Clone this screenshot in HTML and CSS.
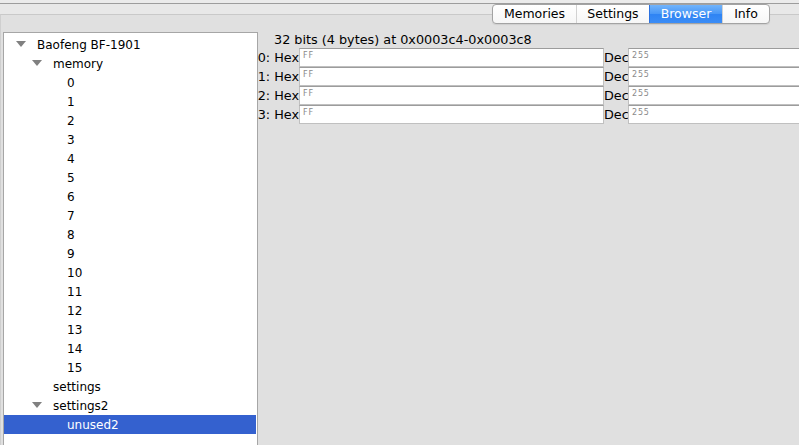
FILE: index.html
```html
<!DOCTYPE html>
<html lang="en">
    <head>
        <title>Baofeng BF-1901 - Browser</title>
        <meta charset="utf-8" />
        <link rel="stylesheet" href="styles.css">
    </head>
    <body>
        <div class="window">
            <div class="topstrip"></div>
            <div class="tabbar">
                <ul class="segmented">
                    <li class="tab-memories">Memories</li>
                    <li class="tab-settings">Settings</li>
                    <li class="tab-browser active">Browser</li>
                    <li class="tab-info">Info</li>
                </ul>
            </div>
            <div class="pane">
                <div class="tree">
                    <div class="node lvl0"><span class="twisty open"></span>Baofeng BF-1901</div>
                    <div class="node lvl1"><span class="twisty open"></span>memory</div>
                    <div class="node lvl2"><span class="twisty"></span>0</div>
                    <div class="node lvl2"><span class="twisty"></span>1</div>
                    <div class="node lvl2"><span class="twisty"></span>2</div>
                    <div class="node lvl2"><span class="twisty"></span>3</div>
                    <div class="node lvl2"><span class="twisty"></span>4</div>
                    <div class="node lvl2"><span class="twisty"></span>5</div>
                    <div class="node lvl2"><span class="twisty"></span>6</div>
                    <div class="node lvl2"><span class="twisty"></span>7</div>
                    <div class="node lvl2"><span class="twisty"></span>8</div>
                    <div class="node lvl2"><span class="twisty"></span>9</div>
                    <div class="node lvl2"><span class="twisty"></span>10</div>
                    <div class="node lvl2"><span class="twisty"></span>11</div>
                    <div class="node lvl2"><span class="twisty"></span>12</div>
                    <div class="node lvl2"><span class="twisty"></span>13</div>
                    <div class="node lvl2"><span class="twisty"></span>14</div>
                    <div class="node lvl2"><span class="twisty"></span>15</div>
                    <div class="node lvl1"><span class="twisty"></span>settings</div>
                    <div class="node lvl1"><span class="twisty open"></span>settings2</div>
                    <div class="node lvl2 selected"><span class="twisty"></span>unused2</div>
                </div>
                <div class="browser">
                    <div class="caption">32 bits (4 bytes) at 0x0003c4-0x0003c8</div>
                    <div class="byte-row">
                        <div class="label"><span>0: Hex</span></div>
                        <div class="field hex">FF</div>
                        <div class="dec">Dec</div>
                        <div class="field decval">255</div>
                    </div>
                    <div class="byte-row">
                        <div class="label"><span>1: Hex</span></div>
                        <div class="field hex">FF</div>
                        <div class="dec">Dec</div>
                        <div class="field decval">255</div>
                    </div>
                    <div class="byte-row">
                        <div class="label"><span>2: Hex</span></div>
                        <div class="field hex">FF</div>
                        <div class="dec">Dec</div>
                        <div class="field decval">255</div>
                    </div>
                    <div class="byte-row">
                        <div class="label"><span>3: Hex</span></div>
                        <div class="field hex">FF</div>
                        <div class="dec">Dec</div>
                        <div class="field decval">255</div>
                    </div>
                </div>
            </div>
        </div>
    </body>
</html>
```

FILE: styles.css
```css
* {
    padding: 0;
    margin: 0;
    box-sizing: border-box;
}
body {
    width: 799px;
    height: 445px;
    overflow: hidden;
    background-color: #e0e0e0;
    font-family: "DejaVu Sans", "Liberation Sans", sans-serif;
    font-size: 12px;
    color: #000;
    -webkit-font-smoothing: antialiased;
}

.window {
    width: 799px;
    height: 445px;
    overflow: hidden;
}

.topstrip {
    height: 4px;
    background-color: #ebebeb;
    border-bottom: 1px solid #9d9d9d;
}

/* segmented tab control, sits over the pane's top border */
.tabbar {
    position: relative;
    z-index: 1;
    height: 10px;
    display: flex;
    justify-content: flex-end;
    padding-right: 29px;
    background-color: #e8e8e8;
}

.segmented {
    list-style: none;
    display: flex;
    height: 20px;
    border: 1px solid #a3a3a3;
    border-radius: 4px;
    overflow: hidden;
    background: linear-gradient(#ffffff, #f6f6f6);
    box-shadow: 0 1px 1px rgba(0, 0, 0, 0.08);
    font-size: 12.5px;
}

.segmented li {
    line-height: 18px;
    text-align: center;
    border-left: 1px solid #d2d2d2;
}

.segmented .tab-memories {
    width: 83px;
    border-left: none;
}
.segmented .tab-settings {
    width: 73px;
}
.segmented .tab-browser {
    width: 73px;
}
.segmented .tab-info {
    width: 47px;
}

.segmented li.active {
    color: #fff;
    border-left-color: #2c72e0;
    background: linear-gradient(#72b4fb, #4897f7 50%, #2f84f4 52%, #3b8df6);
}

.pane {
    display: flex;
    height: 431px;
    padding-top: 17px;
    border-top: 1px solid #c9c9c9;
    border-left: 1px solid #cfcfcf;
}

/* left tree */
.tree {
    flex: none;
    width: 255px;
    height: 420px;
    margin-left: 2px;
    padding-top: 2px;
    background-color: #fff;
    border: 1px solid #a6a6a6;
}

.tree .node {
    display: flex;
    align-items: center;
    height: 19px;
    white-space: nowrap;
}

.tree .lvl0 {
    padding-left: 12px;
}
.tree .lvl1 {
    padding-left: 28px;
}
.tree .lvl2 {
    padding-left: 42px;
}

.tree .twisty {
    flex: none;
    width: 21px;
    height: 5px;
}

.tree .twisty.open::before {
    content: "";
    display: block;
    width: 0;
    height: 0;
    border-left: 5px solid transparent;
    border-right: 5px solid transparent;
    border-top: 6px solid #808080;
    margin-top: -1px;
}

.tree .node.selected {
    margin-right: 1px;
    color: #fff;
    background-color: #3461cf;
}

/* right side, byte browser */
.browser {
    flex: 1;
    min-width: 0;
    overflow: hidden;
    font-size: 12.8px;
}

.browser .caption {
    height: 16px;
    line-height: 16px;
    padding-left: 16px;
    white-space: nowrap;
}

.byte-row {
    display: flex;
    height: 19px;
}

.byte-row .label {
    flex: none;
    display: flex;
    justify-content: flex-end;
    width: 41px;
    overflow: hidden;
    line-height: 19px;
    white-space: nowrap;
}

.byte-row .field {
    flex: none;
    height: 19px;
    padding: 2px 0 0 3px;
    background-color: #fff;
    border: 1px solid #c0c0c0;
    border-top-color: #9c9c9c;
    font-size: 8px;
    line-height: 9px;
    letter-spacing: 0.8px;
    color: #8a8a8a;
}

.byte-row .hex {
    width: 305px;
}

.byte-row .dec {
    flex: none;
    width: 24px;
    overflow: hidden;
    line-height: 19px;
    white-space: nowrap;
}

.byte-row .decval {
    width: 220px;
}
```
